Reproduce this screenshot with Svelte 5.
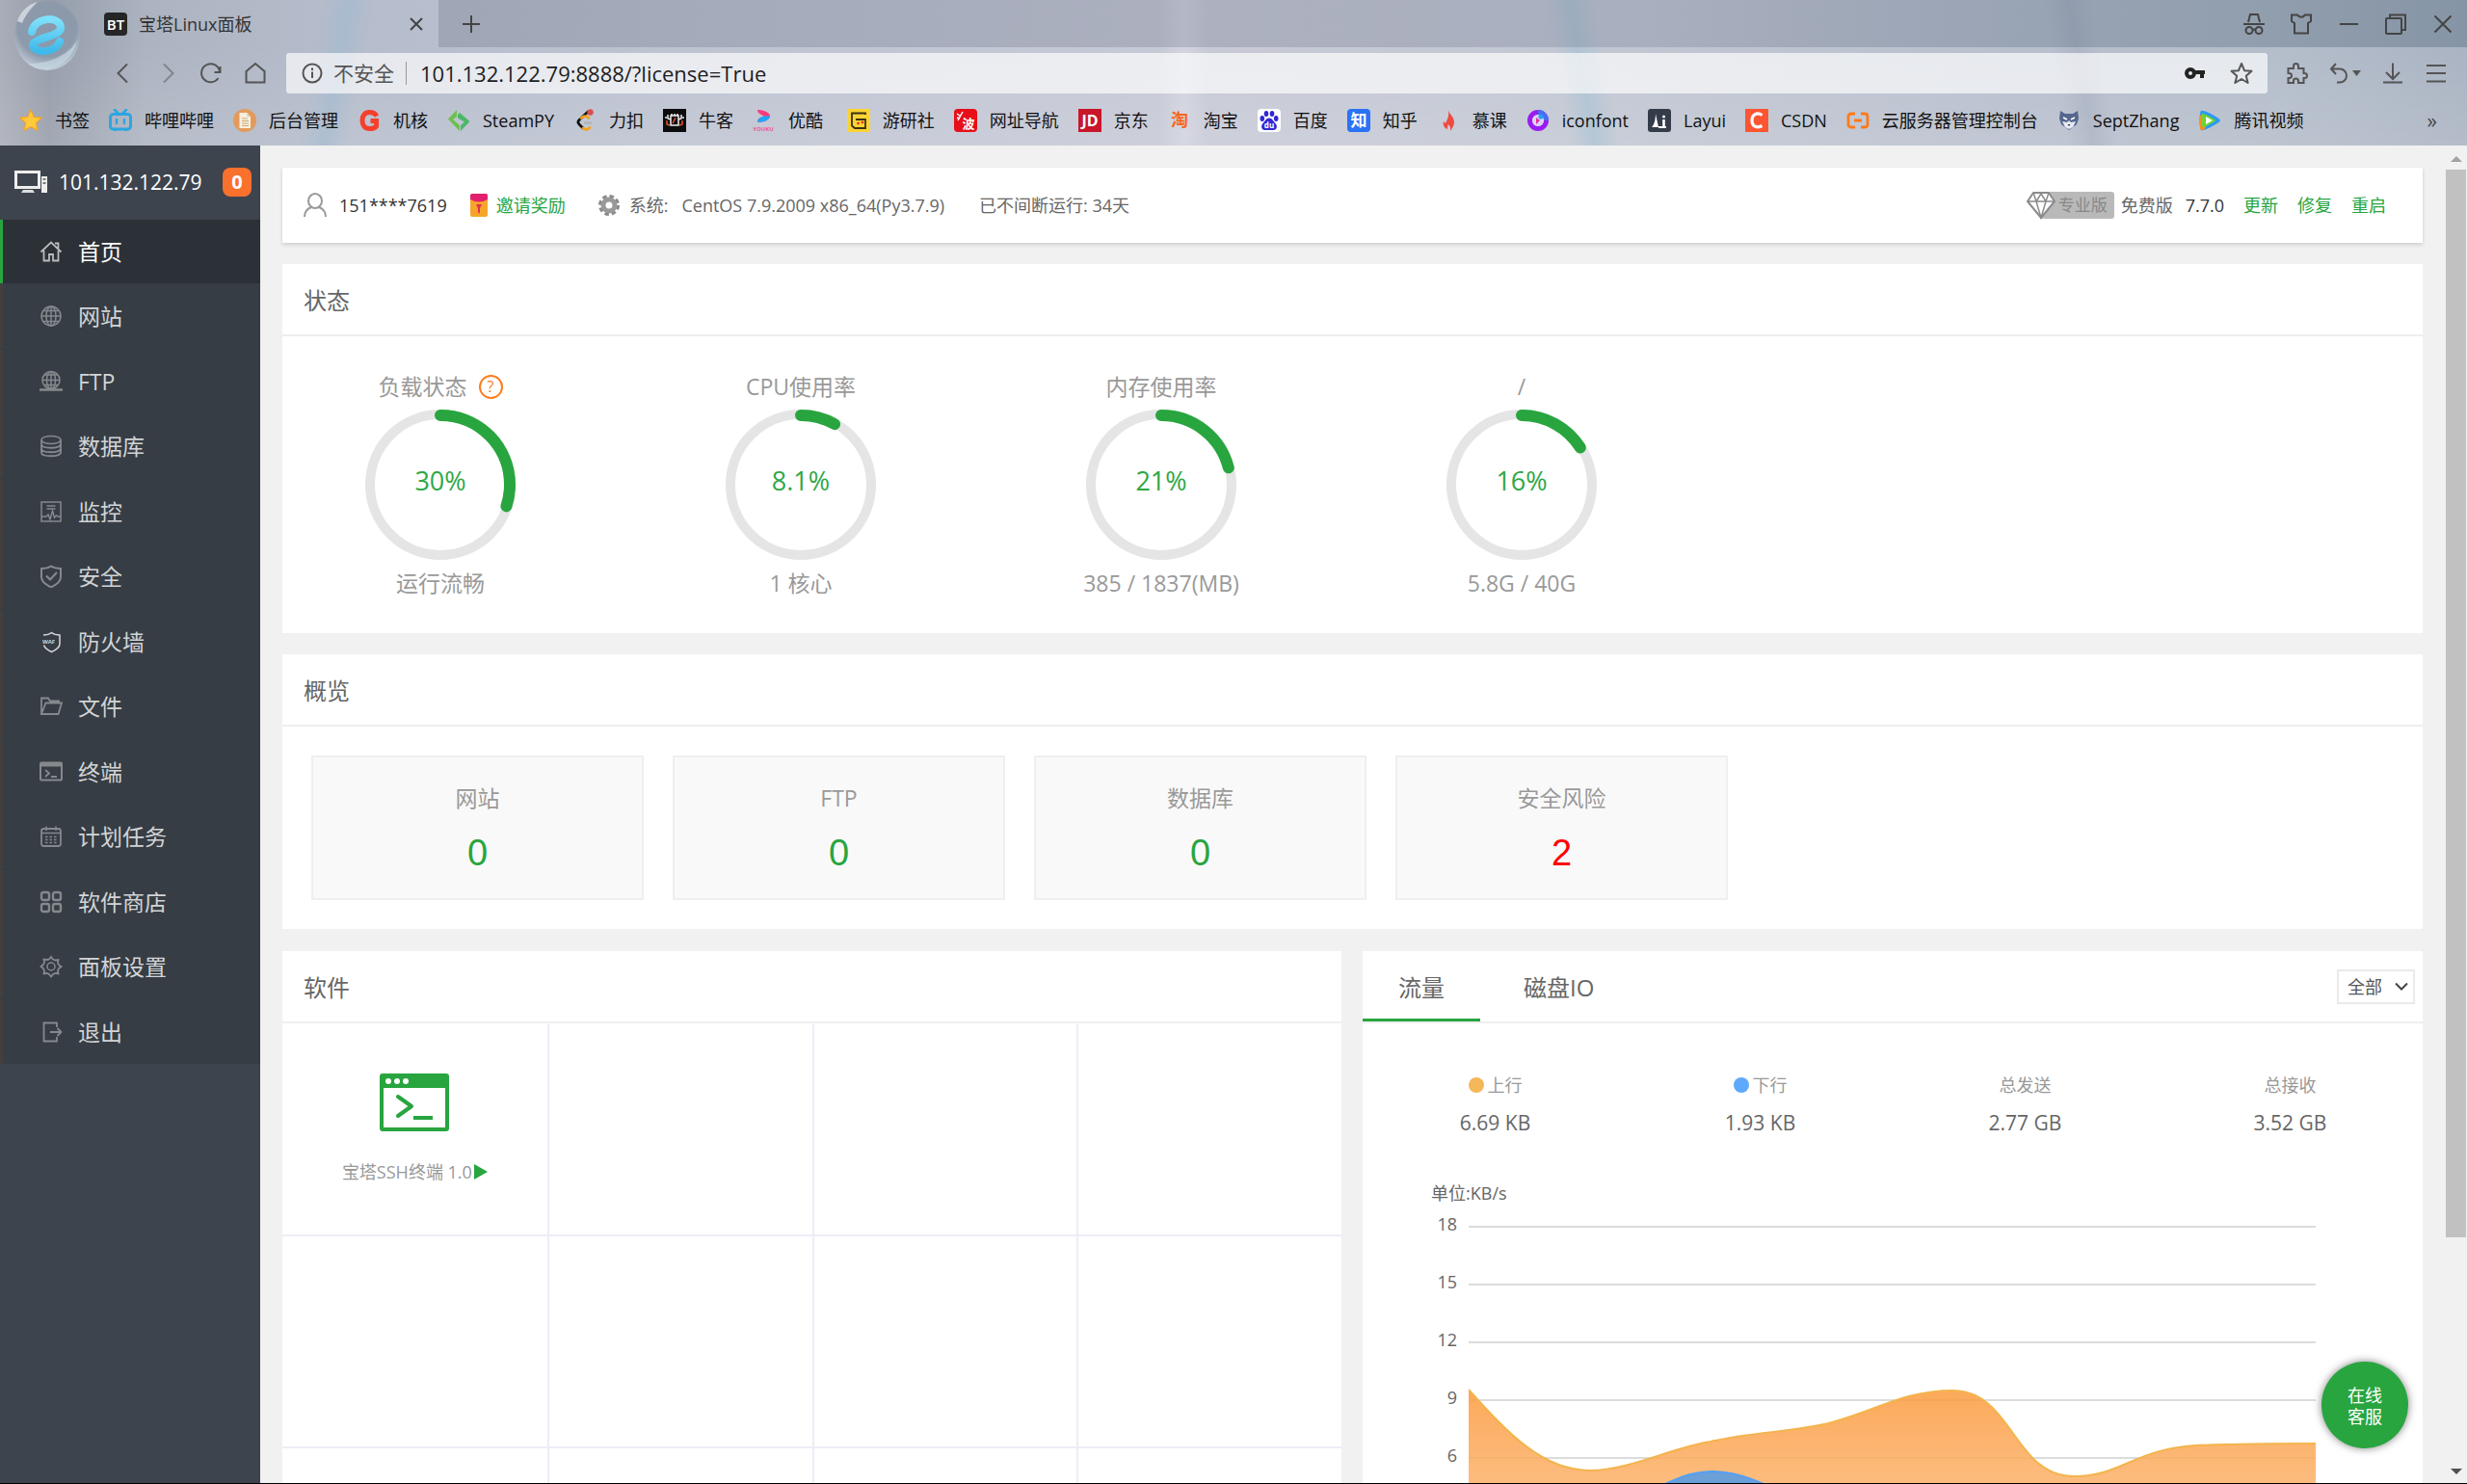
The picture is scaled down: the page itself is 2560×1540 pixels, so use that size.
<script>
  const bookmarks = [
    { name: '书签', icon: 'star' },
    { name: '哔哩哔哩', icon: 'bili' },
    { name: '后台管理', icon: 'doc' },
    { name: '机核', icon: 'g' },
    { name: 'SteamPY', icon: 'steampy' },
    { name: '力扣', icon: 'leet' },
    { name: '牛客', icon: 'niuke' },
    { name: '优酷 ', icon: 'youku' },
    { name: '游研社', icon: 'yys' },
    { name: '网址导航', icon: 'nav' },
    { name: '京东', icon: 'jd' },
    { name: '淘宝', icon: 'tao' },
    { name: '百度', icon: 'baidu' },
    { name: '知乎', icon: 'zhihu' },
    { name: '慕课', icon: 'mooc' },
    { name: 'iconfont', icon: 'iconfont' },
    { name: 'Layui', icon: 'layui' },
    { name: 'CSDN', icon: 'csdn' },
    { name: '云服务器管理控制台', icon: 'cloud' },
    { name: 'SeptZhang', icon: 'sept' },
    { name: '腾讯视频', icon: 'tencent' },
  ];

  const favicons = {
    star: '<path d="M12 1l3.300 7.400 8 .8-6 5.400 1.800 7.900-7.100-4.100-7.100 4.100 1.800-7.900-6-5.400 8-.8z" fill="#ffc93c" stroke="#f3a32a" stroke-width="1.200" stroke-linejoin="round"/>',
    bili: '<path d="M6 1l4 4M18 1l-4 4" stroke="#2ea5df" stroke-width="2.600" stroke-linecap="round"/><rect x="1.500" y="5.500" width="21" height="15.500" rx="3" fill="none" stroke="#2ea5df" stroke-width="3"/><path d="M8 11v4M16 11v4" stroke="#2ea5df" stroke-width="2.400" stroke-linecap="round"/><path d="M5 21h3v2H5zM16 21h3v2h-3z" fill="#2ea5df"/>',
    doc: '<circle cx="12" cy="12" r="12" fill="#e39a5c"/><path d="M6.500 4h8l3.500 4v12H6.500z" fill="#f8efdd"/><path d="M14.500 4v4H18" fill="#d9c5a4"/><path d="M9 10h6M9 12.500h7M9 15h7M9 17.500h7" stroke="#c9a77c" stroke-width="1.100"/>',
    g: '<path d="M20 7.500C18 4 15.500 3.500 12.500 3.500 7.500 3.500 5 7 5 12s2.500 8.500 7.500 8.500c3.500 0 6-1 7-2.500v-5.500h-6" fill="none" stroke="#f5402c" stroke-width="5"/>',
    steampy: '<path d="M10 1v7l-4 3 7 6v6L1 10.500z" fill="#6cc04a"/><path d="M11 6l2-2 10.500 9L14 23v-6l4-3.500-7-4z" fill="#4cb865"/>',
    leet: '<path d="M15 3L6 11.500c-1.500 1.500-1.500 3 0 4.500l4 4" fill="none" stroke="#111" stroke-width="2.600" stroke-linecap="round"/><path d="M8 9.500c3-2.500 5.500-2.500 8 0M10 20c2.500 2 5 1.500 7-.5" fill="none" stroke="#f6a21b" stroke-width="2.600" stroke-linecap="round"/><path d="M11 14.500h8" stroke="#b3b3b3" stroke-width="2.400"/><circle cx="17.500" cy="3.500" r="3.200" fill="#d9504a"/>',
    niuke: '<rect width="24" height="24" fill="#0c0c0c"/><path d="M8 7h8v10H8zM3 8v2M21 8v2M5 6v4l3 1M19 6v4l-3 1M9 7V5M12 7V5M15 7V5" fill="none" stroke="#eee" stroke-width="1.500"/><path d="M10 15l3-6M4 12v4l3 1M20 12v4l-3 1" fill="none" stroke="#e5542e" stroke-width="1.500"/>',
    youku: '<path d="M5 1c0 3 3 5 7 6.500-4 1-7 3-7 6 5 1 13-2 13-6S11 1 5 1z" fill="#fb3b7c"/><path d="M18 7.500c0 4-8 7-13 6 0-3 3-5 7-6z" fill="#20a5fa"/><text x="11" y="22.500" font-size="6" font-weight="700" text-anchor="middle" fill="#e85b93">YOUKU</text>',
    yys: '<rect width="24" height="24" fill="#fbd334"/><path d="M19 6V4.500H5v13l3 2.500h11v-9H9" fill="none" stroke="#3b3210" stroke-width="1.800"/><circle cx="11.500" cy="15" r="1.300" fill="#e22"/><circle cx="16" cy="14" r="1.300" fill="#e22"/>',
    nav: '<rect width="24" height="24" rx="4" fill="#e60f1a"/><text x="15" y="19.500" font-size="13" font-weight="700" text-anchor="middle" fill="#fff">波</text><path d="M3 5l3 2M3 9l3 1M9 3l-5 9" stroke="#fff" stroke-width="1.500"/>',
    jd: '<rect width="24" height="24" fill="#c8162a"/><text x="12" y="18" font-size="16" font-weight="700" text-anchor="middle" fill="#fff">JD</text>',
    tao: '<text x="12" y="18" font-size="18" font-weight="700" text-anchor="middle" fill="#f9651c">淘</text>',
    baidu: '<rect width="24" height="24" rx="4" fill="#fff"/><g fill="#3028d5"><ellipse cx="4.800" cy="10" rx="2.300" ry="3"/><ellipse cx="9" cy="5" rx="2.300" ry="3"/><ellipse cx="15" cy="5" rx="2.300" ry="3"/><ellipse cx="19.200" cy="10" rx="2.300" ry="3"/><path d="M12 9.500c3 0 4 3 6.500 5.500s1.500 7-2 7H7.500c-3.500 0-4.500-4.500-2-7S9 9.500 12 9.500z"/></g><text x="12" y="20" font-size="8" font-weight="700" text-anchor="middle" fill="#fff">du</text>',
    zhihu: '<rect width="24" height="24" rx="4" fill="#2a72f6"/><text x="12" y="18" font-size="17" font-weight="700" text-anchor="middle" fill="#fff">知</text>',
    mooc: '<path d="M12 1c1 5 6 7 6 13 0 3-2 6-4 9 .5-4-.5-5-2-7-1 2-1 3-1 5-3-1-5-4-4-8l2 2c2-4 4-8 3-14z" fill="#ee4b42"/>',
    iconfont: '<circle cx="12" cy="12" r="8.500" fill="none" stroke="#9a1bf2" stroke-width="5"/><path d="M12 3.500a8.500 8.500 0 0 1 8.500 8.500" fill="none" stroke="#4a6cf0" stroke-width="5"/><circle cx="12" cy="12" r="6" fill="#d9d4f4"/><path d="M10 9l4 3-4 4z" fill="#e62ba5"/><circle cx="15" cy="8" r="2.600" fill="#2e9cf7"/>',
    layui: '<rect width="24" height="24" rx="3" fill="#343c4a"/><path d="M4 19c3-3 4-9 4-14l3 14z" fill="#fff"/><path d="M11 18h8v2h-8z" fill="#fff"/><path d="M16.500 11v8" stroke="#fff" stroke-width="2.600"/><circle cx="16.500" cy="8" r="1.500" fill="#fff"/>',
    csdn: '<rect width="24" height="24" fill="#fc5531"/><path d="M17.500 6.500C13 3.500 7 5 7 12s6 8 10.500 5.500" fill="none" stroke="#fff" stroke-width="3.200"/>',
    cloud: '<path d="M9 5H5Q2 5 2 8v8q0 3 3 3h4M15 5h4q3 0 3 3v8q0 3-3 3h-4M8 12h8" fill="none" stroke="#ff7a1a" stroke-width="2.800"/>',
    sept: '<path d="M3 2l5 3h8l5-3 1 8-2 6-8 6-8-6-2-6z" fill="#56678f"/><path d="M5 13l5 1 2-2 2 2 5-1-3 6-4 2-4-2z" fill="#e8ebf2"/><path d="M6 9l4 2M18 9l-4 2" stroke="#fff" stroke-width="1.500"/><path d="M10.500 16h3L12 18z" fill="#27345a"/>',
    tencent: '<path d="M3 2c2-2 20 8 20 10S5 24 3 22 1 4 3 2z" fill="#2a9af5"/><path d="M2 6v14c0 3 3 2 6 0L4 8z" fill="#ff8a1e"/><path d="M4 5c2-1 14 6 14 7S6 20 4.500 19 3 6 4 5z" fill="#6fd42f"/><path d="M8 8l7 4-7 4z" fill="#fff"/>',
  };

  const menu = [
    { name: '首页', icon: 'home' },
    { name: '网站', icon: 'globe' },
    { name: 'FTP', icon: 'ftp' },
    { name: '数据库', icon: 'db' },
    { name: '监控', icon: 'monitor' },
    { name: '安全', icon: 'shield' },
    { name: '防火墙', icon: 'waf' },
    { name: '文件', icon: 'folder' },
    { name: '终端', icon: 'terminal' },
    { name: '计划任务', icon: 'calendar' },
    { name: '软件商店', icon: 'apps' },
    { name: '面板设置', icon: 'gear' },
    { name: '退出', icon: 'exit' },
  ];

  const menuIcons = {
    home: '<g stroke="#b9bbbe" stroke-width="1.800"><path d="M1.500 12.500L12 2.500l10.500 10M16 3.500h3.500v5M4.500 11v10.500H10V15h4v6.500h5.500V11"/></g>',
    globe: '<circle cx="12" cy="12" r="10"/><ellipse cx="12" cy="12" rx="5" ry="10"/><path d="M12 2v20M2 12h20M4 6.500h16M4 17.500h16"/>',
    ftp: '<circle cx="12" cy="10.500" r="9"/><ellipse cx="12" cy="10.500" rx="4.500" ry="9"/><path d="M12 1.500v18M3 10.500h18M5 5h14M5 15.500h14"/><path d="M0 20.500h24M9 20.500h6" stroke-width="2.500"/>',
    db: '<ellipse cx="12" cy="5.500" rx="10" ry="4"/><path d="M2 5.500v13c0 5 20 5 20 0v-13M2 10c0 5 20 5 20 0M2 14.500c0 5 20 5 20 0" stroke-width="1.800"/>',
    monitor: '<rect x="2" y="2" width="20" height="20"/><path d="M7.500 6h9M7.500 9h9M2 17h5l2-2 2 5 2.500-9 2 7 2-2 1.500 1H22"/>',
    shield: '<path d="M12 1.500c3 2 6 2.500 10 2.500v9c0 5-5 8-10 10.500C7 21 2 18 2 13V4c4 0 7-.5 10-2.500z" stroke-width="2"/><path d="M7 11.500l4 4 7-7.500" stroke-width="2.200"/>',
    waf: '<g stroke="#cfd1d3" stroke-width="1.600"><path d="M4 5c3 0 6-.5 8.500-2.500C15 4.500 17 5 21 5v9c0 4-4 6.500-8.500 8.500C8 20.500 5.500 18.500 4.500 15.500"/></g><text x="9.500" y="13.500" font-size="6" font-weight="700" text-anchor="middle" fill="#cfd1d3" stroke="none">WAF</text>',
    folder: '<path d="M2 20V3.500h7l2 3h9V9M2 20L6.500 8.500H23L19.500 20z" stroke-width="1.800"/>',
    terminal: '<rect x="1" y="2.500" width="22" height="18" rx="1" stroke-width="2"/><path d="M1 4.500h22" stroke-width="4"/><path d="M6 10l4 3.500L6 17M12 17h6" stroke-width="1.800"/>',
    calendar: '<rect x="2" y="4" width="20" height="18" rx="2.500" stroke-width="1.800"/><path d="M2 8.500h20M7 1.500V6M17 1.500V6"/><path d="M6 12.500h12M6 15.500h12M6 18.500h12" stroke-dasharray="2.500 2" stroke-width="1.700"/>',
    apps: '<g stroke-width="2.400"><rect x="2" y="2" width="8" height="8" rx="2"/><rect x="14" y="2" width="8" height="8" rx="2"/><rect x="2" y="14" width="8" height="8" rx="2"/><rect x="14" y="14" width="8" height="8" rx="2"/></g>',
    gear: '<circle cx="12" cy="12" r="4"/><path d="M10 4.500L12 2l2 2.500 2.500 1 3-.5-.5 3 1 2.500L22.500 12 20 14l-1 2.500.5 3-3-.5-2.500 1-2 2.500L10 20l-2.500-1-3 .5.500-3L4 14l-2.500-2L4 10l1-2.500-.5-3 3 .5z" stroke-width="1.800"/>',
    exit: '<path d="M18 7V2.500H4.500v19H18V17M11 12h11M18.500 8l4 4-4 4" stroke-width="1.800"/>',
  };

  const gauges = [
    { title: '负载状态', help: true, value: 30, note: '运行流畅' },
    { title: 'CPU使用率', value: 8.1, note: '1 核心' },
    { title: '内存使用率', value: 21, note: '385 / 1837(MB)' },
    { title: '/', value: 16, note: '5.8G / 40G' },
  ];

  const overview = [
    { name: '网站', count: 0 },
    { name: 'FTP', count: 0 },
    { name: '数据库', count: 0 },
    { name: '安全风险', count: 2, risk: true },
  ];

  const stats = [
    { name: '上行', value: '6.69 KB', dot: 'up' },
    { name: '下行', value: '1.93 KB', dot: 'down' },
    { name: '总发送', value: '2.77 GB' },
    { name: '总接收', value: '3.52 GB' },
  ];

  const ticks = [18, 15, 12, 9, 6];
  const cells = Array.from({ length: 12 }, (_, i) => i);
  const ring = 2 * Math.PI * 72;

  let url = $state('101.132.122.79:8888/?license=True');
  let tab = $state('net');
  let scope = $state('all');
</script>

<div class="window">
  <header class="chrome">
    <svg class="logo" viewBox="0 0 72 76" aria-hidden="true">
      <defs>
        <radialGradient id="ball" cx="50%" cy="35%" r="65%">
          <stop offset="0" stop-color="#8b98ab" />
          <stop offset="0.700" stop-color="#8d9aab" />
          <stop offset="1" stop-color="#c3ced9" />
        </radialGradient>
        <linearGradient id="eFill" x1="0" y1="0" x2="0" y2="1">
          <stop offset="0" stop-color="#7fe0fa" />
          <stop offset="1" stop-color="#3fb9ea" />
        </linearGradient>
      </defs>
      <ellipse cx="36" cy="37" rx="34" ry="36" fill="url(#ball)" />
      <path d="M5 22C9 10 18 4 26 2C20 8 14 14 10 24z" fill="#e6eaf0" opacity="0.700" />
      <path d="M16 66c12 10 30 8 42-6 6-7 8-12 9-18-8 14-26 24-51 24z" fill="#c5d8e2" opacity="0.700" />
      <path d="M20 33C23 17 50 16 50 29C50 38 26 38 21 46C21 56 44 56 49 43" fill="none" stroke="url(#eFill)" stroke-width="8" stroke-linecap="round" stroke-linejoin="round" />
    </svg>

    <div class="tabstrip">
      <div class="tab">
        <span class="tabicon">BT</span>
        <span class="tabtitle">宝塔Linux面板</span>
        <button class="plain" aria-label="关闭标签页">
          <svg width="16" height="16" viewBox="0 0 16 16"><path d="M2 2l12 12M14 2L2 14" /></svg>
        </button>
      </div>
      <div class="strip">
        <button class="plain" aria-label="新标签页">
          <svg width="20" height="20" viewBox="0 0 20 20"><path d="M10 1v18M1 10h18" /></svg>
        </button>
        <div class="winctl">
          <button class="plain" aria-label="无痕模式">
            <svg width="24" height="24" viewBox="0 0 24 24"><path d="M6 10l2-8h8l2 8M1 12h22" /><circle cx="7" cy="18.500" r="3.500" /><circle cx="17" cy="18.500" r="3.500" /><path d="M10.500 18q1.500-1 3 0" /></svg>
          </button>
          <button class="plain" aria-label="皮肤">
            <svg width="24" height="24" viewBox="0 0 24 24"><path d="M2 2.500h6q4 4.500 8 0h6V9l-3 2v10.500H5V11L2 9z" /></svg>
          </button>
          <button class="plain" aria-label="最小化">
            <svg width="24" height="24" viewBox="0 0 24 24"><path d="M3 12h19" /></svg>
          </button>
          <button class="plain" aria-label="还原">
            <svg width="24" height="24" viewBox="0 0 24 24"><rect x="2" y="6" width="16" height="16" rx="1" /><path d="M6 6V2.500h16V18h-4" /></svg>
          </button>
          <button class="plain" aria-label="关闭">
            <svg width="24" height="24" viewBox="0 0 24 24"><path d="M3.500 3.500l17 17M20.500 3.500l-17 17" /></svg>
          </button>
        </div>
      </div>
    </div>

    <div class="toolbar">
      <nav class="navbtns" aria-label="导航">
        <button class="plain" aria-label="后退"><svg width="24" height="24" viewBox="0 0 24 24"><path d="M17 2.500L7.500 12l9.500 9.500" /></svg></button>
        <button class="plain faded" aria-label="前进"><svg width="24" height="24" viewBox="0 0 24 24"><path d="M9 2.500l9.500 9.500L9 21.500" /></svg></button>
        <button class="plain" aria-label="刷新"><svg width="24" height="24" viewBox="0 0 24 24"><path d="M21.500 5v6h-6M21 10.500A9.500 9.500 0 1 0 19.500 17" /></svg></button>
        <button class="plain" aria-label="主页"><svg width="24" height="24" viewBox="0 0 24 24"><path d="M2.500 10L12 2l9.500 8v11.500h-19z" /></svg></button>
      </nav>
      <div class="address">
        <svg width="22" height="22" viewBox="0 0 22 22"><circle cx="11" cy="11" r="9.500" /><path d="M11 9.500V16M11 5.500V8" /></svg>
        <label for="url">不安全</label>
        <input id="url" type="text" bind:value={url} />
        <button class="plain" aria-label="密码">
          <svg width="22" height="14" viewBox="0 0 22 14"><circle class="key" cx="6" cy="7" r="4" /><path class="key" d="M10 6h11M18 6v6" /></svg>
        </button>
        <button class="plain" aria-label="收藏">
          <svg width="24" height="24" viewBox="0 0 24 24"><path d="M12 2l3 7.200 7.500.6-5.700 5 1.800 7.200-6.600-4-6.600 4 1.800-7.200-5.700-5L9 9.200z" stroke-linejoin="round" /></svg>
        </button>
      </div>
      <div class="tools">
        <button class="plain" aria-label="扩展"><svg width="24" height="24" viewBox="0 0 24 24"><path d="M3.500 7H9V4.500a2.500 2.500 0 0 1 5 0V7h5.500v5h1a2.500 2.500 0 0 1 0 5h-1v5H14v-2a2.300 2.300 0 0 0-5 0v2H3.500v-5h1a2.500 2.500 0 0 0 0-5h-1z" /></svg></button>
        <button class="plain" aria-label="撤销"><svg width="34" height="24" viewBox="0 0 34 24"><path d="M8 2L3 7.500 8 13M3 7.500h9a7 7 0 0 1 0 14H9" /><path class="caret" d="M25 9h9l-4.500 6z" /></svg></button>
        <button class="plain" aria-label="下载"><svg width="24" height="24" viewBox="0 0 24 24"><path d="M12 1.500v16M5 11l7 7 7-7M2 21.500h20" /></svg></button>
        <button class="plain" aria-label="菜单"><svg width="24" height="24" viewBox="0 0 24 24"><path d="M2 4h20M2 12h20M2 20.500h20" /></svg></button>
      </div>
    </div>

    <nav class="bookmarks" aria-label="书签栏">
      {#each bookmarks as b}
        <a href="#{b.icon}">
          <svg width="24" height="24" viewBox="0 0 24 24" aria-hidden="true">{@html favicons[b.icon]}</svg>
          <span>{b.name}</span>
        </a>
      {/each}
      <button class="plain more" aria-label="更多书签">»</button>
    </nav>
  </header>

  <div class="body">
    <aside class="side">
      <div class="host">
        <svg width="34" height="26" viewBox="0 0 34 26" aria-hidden="true">
          <rect x="1.500" y="2.500" width="24" height="16" fill="none" stroke="#eee" stroke-width="3" />
          <path d="M9 21h10l2 3H7z" fill="#ddd" />
          <rect x="28" y="7" width="6" height="17" fill="#eee" />
          <path d="M29.500 10h3M29.500 14h3" stroke="#555" stroke-width="1.500" />
        </svg>
        <span class="ip">101.132.122.79</span>
        <span class="badge">0</span>
      </div>
      <nav class="menu" aria-label="主菜单">
        {#each menu as m, i}
          <a href="#{m.icon}" class:active={i === 0}>
            <svg width="24" height="24" viewBox="0 0 24 24" fill="none" stroke="#85898d" stroke-width="1.500" aria-hidden="true">{@html menuIcons[m.icon]}</svg>
            <span>{m.name}</span>
          </a>
        {/each}
      </nav>
    </aside>

    <main>
      <section class="card info">
        <svg class="user" width="26" height="26" viewBox="0 0 26 26" aria-hidden="true"><ellipse cx="12" cy="8.500" rx="7" ry="7.500" /><path d="M8 15C3 17 1 20 1 25M16 15c5 2 7 5 7 10" /></svg>
        <span class="dark phone">151****7619</span>
        <svg class="packet" width="18" height="24" viewBox="0 0 18 24" aria-hidden="true"><rect width="18" height="24" rx="2" fill="#f5a62a" /><path d="M0 6V2q0-2 2-2h14q2 0 2 2v4q-9 5-18 0z" fill="#e2206d" /><path d="M6 11h6l-2 4v4l-1 2-1-2v-4z" fill="#e2304f" /></svg>
        <a class="green" href="#invite">邀请奖励</a>
        <svg class="cog" width="22" height="22" viewBox="0 0 22 22" aria-hidden="true"><circle cx="11" cy="11" r="9.500" fill="none" stroke="#888" stroke-width="3" stroke-dasharray="4.500 3" /><circle cx="11" cy="11" r="6" fill="none" stroke="#999" stroke-width="5" /></svg>
        <span>系统:</span>
        <span class="os">CentOS 7.9.2009 x86_64(Py3.7.9)</span>
        <span class="uptime">已不间断运行: 34天</span>
        <div class="version">
          <span class="pro">
            <svg width="30" height="30" viewBox="0 0 30 30" aria-hidden="true"><path d="M7 2h16l6 9-14 17L1 11z" fill="#fff" stroke="#8b8b8b" stroke-width="2" stroke-linejoin="round" /><path d="M1 11h28M7 2l3 9 5-8 5 8 3-9M10 11l5 17 5-17" fill="none" stroke="#8b8b8b" stroke-width="1.500" /></svg>
            <span>专业版</span>
          </span>
          <span>免费版</span>
          <span class="dark num">7.7.0</span>
          <a class="green" href="#update">更新</a>
          <a class="green" href="#repair">修复</a>
          <a class="green" href="#restart">重启</a>
        </div>
      </section>

      <section class="card">
        <h2>状态</h2>
        <div class="gauges">
          {#each gauges as g}
            <div class="gauge">
              <div class="line">
                <span>{g.title}</span>
                {#if g.help}<button class="plain help" aria-label="帮助">?</button>{/if}
              </div>
              <svg width="158" height="158" viewBox="0 0 158 158" role="img" aria-label="{g.title} {g.value}%">
                <circle cx="79" cy="79" r="73" fill="none" stroke="#e5e5e5" stroke-width="10" />
                <circle cx="79" cy="79" r="72" fill="none" stroke="#28a53f" stroke-width="12" stroke-linecap="round" stroke-dasharray="{(ring * g.value) / 100} {ring}" transform="rotate(-90 79 79)" />
                <text x="79" y="85" text-anchor="middle" font-size="27" fill="#2fa746">{g.value}%</text>
              </svg>
              <div class="line">{g.note}</div>
            </div>
          {/each}
        </div>
      </section>

      <section class="card">
        <h2>概览</h2>
        <div class="overview">
          {#each overview as o}
            <a class="box" href="#{o.name}">
              <span>{o.name}</span>
              <strong class:risk={o.risk}>{o.count}</strong>
            </a>
          {/each}
        </div>
      </section>

      <div class="split">
        <section class="card">
          <h2>软件</h2>
          <div class="apps">
            {#each cells as c}
              <div class="cell">
                {#if c === 0}
                  <svg width="72" height="60" viewBox="0 0 72 60" aria-hidden="true">
                    <rect x="2" y="2" width="68" height="56" rx="1" fill="#fff" stroke="#28a53f" stroke-width="4" />
                    <path d="M1 1h70v14H1z" fill="#28a53f" />
                    <circle cx="9" cy="8" r="3" fill="#fff" /><circle cx="18" cy="8" r="3" fill="#fff" /><circle cx="27" cy="8" r="3" fill="#fff" />
                    <path d="M19 24l14 10-14 10" fill="none" stroke="#28a53f" stroke-width="4" stroke-linecap="round" stroke-linejoin="round" />
                    <path d="M35 46h20" stroke="#28a53f" stroke-width="4" />
                  </svg>
                  <div class="appname">宝塔SSH终端 1.0<svg width="14" height="16" viewBox="0 0 14 16" aria-hidden="true"><path d="M0 0l14 8-14 8z" fill="#28a53f" /></svg></div>
                {/if}
              </div>
            {/each}
          </div>
        </section>

        <section class="card">
          <div class="tabs">
            <button class="plain" class:on={tab === 'net'} onclick={() => (tab = 'net')}>流量</button>
            <button class="plain" class:on={tab === 'disk'} onclick={() => (tab = 'disk')}>磁盘IO</button>
            <div class="pick">
              <select aria-label="网卡" bind:value={scope}>
                <option value="all">全部</option>
                <option value="eth0">eth0</option>
              </select>
              <svg width="14" height="10" viewBox="0 0 14 10" aria-hidden="true"><path d="M1 1.500l6 6 6-6" fill="none" stroke="#444" stroke-width="2" /></svg>
            </div>
          </div>
          <div class="stats">
            {#each stats as s}
              <div class="stat">
                <span class="label">{#if s.dot}<i class="dot {s.dot}"></i>{/if}{s.name}</span>
                <span class="value">{s.value}</span>
              </div>
            {/each}
          </div>
          <div class="chart">
            <div class="unit">单位:KB/s</div>
            <div class="plot">
              <div class="ticks">{#each ticks as t}<span>{t}</span>{/each}</div>
              <svg viewBox="0 0 879 362" preserveAspectRatio="none" aria-hidden="true">
                <defs>
                  <linearGradient id="up" x1="0" y1="0" x2="0" y2="1">
                    <stop offset="0" stop-color="#fb9a3c" stop-opacity="0.850" />
                    <stop offset="1" stop-color="#fdc693" stop-opacity="0.850" />
                  </linearGradient>
                </defs>
                {#each ticks as t, i}
                  <path d="M0 {i * 60 + 1}H879" stroke="#dcdcdc" stroke-width="2" />
                {/each}
                <path d="M0 170C38 212 75 254 126 254C166 254 211 230 251 224C297 213 335 215 377 204C425 191 452 171 502 171C565 171 565 260 628 260C678 260 690 232 754 228C800 226 840 226 879 226V361H0Z" fill="url(#up)" />
                <path d="M0 170C38 212 75 254 126 254C166 254 211 230 251 224C297 213 335 215 377 204C425 191 452 171 502 171C565 171 565 260 628 260C678 260 690 232 754 228C800 226 840 226 879 226" fill="none" stroke="#f3b44c" stroke-width="2" />
                <path d="M126 310C160 300 205 255 252 255C300 255 340 290 377 300V361H126Z" fill="#6b9fd8" />
                <path d="M126 310C160 300 205 255 252 255C300 255 340 290 377 300" fill="none" stroke="#52a0f5" stroke-width="2" />
              </svg>
            </div>
          </div>
        </section>
      </div>
    </main>

    <div class="scroll" aria-hidden="true">
      <svg width="12" height="6" viewBox="0 0 12 6"><path d="M0 6l6-6 6 6z" fill="#a3a3a3" /></svg>
      <div class="thumb"></div>
      <svg width="12" height="6" viewBox="0 0 12 6"><path d="M0 0l6 6 6-6z" fill="#505050" /></svg>
    </div>
  </div>

  <button class="plain service">在线<br />客服</button>
</div>

<style>
  :global(body) {
    margin: 0;
    background: #f1f1f1;
  }

  .window {
    position: relative;
    display: flex;
    flex-direction: column;
    height: 100vh;
    box-sizing: border-box;
    border-bottom: 1px solid #000;
    overflow: hidden;
    font-family: 'Open Sans', 'Noto Sans CJK SC', sans-serif;
    font-size: 18px;
    line-height: 24px;
    color: #666;
  }

  a {
    color: inherit;
    text-decoration: none;
  }

  .plain {
    display: inline-flex;
    align-items: center;
    justify-content: center;
    padding: 0;
    border: 0;
    background: none;
    font: inherit;
    color: inherit;
    cursor: pointer;
  }

  svg {
    flex: none;
  }

  /* browser frame */
  .chrome {
    position: relative;
    flex: none;
    height: 151px;
    background:
      linear-gradient(100deg, transparent 13%, rgba(150, 185, 210, 0.4) 14%, transparent 15%),
      linear-gradient(90deg, transparent 47%, rgba(225, 225, 235, 0.45) 48%, transparent 49%),
      linear-gradient(80deg, transparent 63%, rgba(150, 190, 210, 0.4) 64%, transparent 65%),
      linear-gradient(80deg, transparent 83%, rgba(150, 160, 180, 0.3) 84%, transparent 85%),
      linear-gradient(180deg, rgba(255, 255, 255, 0) 30%, rgba(255, 255, 255, 0.12)),
      linear-gradient(90deg, #a9adb8, #969daa 2%, #adb4c1 6%, #b5bccb 14%, #bfc4d2 30%, #c7cad6 50%, #c2c7d3 65%, #b8bfcd 82%, #b4bdca 92%, #aab3c2);
  }

  .chrome svg {
    fill: none;
    stroke: #444;
    stroke-width: 2;
  }

  .chrome .toolbar svg {
    stroke: #555;
  }

  .chrome .key {
    stroke: #222;
    stroke-width: 4;
  }

  .chrome .caret {
    fill: #555;
    stroke: none;
  }

  .chrome .bookmarks svg {
    stroke: none;
  }

  .chrome .logo {
    position: absolute;
    left: 13px;
    top: 0;
    width: 72px;
    height: 76px;
    stroke: none;
  }

  .tabstrip {
    display: flex;
    height: 49px;
  }

  .tab {
    display: flex;
    align-items: center;
    box-sizing: border-box;
    width: 455px;
    padding: 0 15px 0 108px;
    gap: 12px;
    color: #333;
  }

  .tabicon {
    width: 24px;
    height: 24px;
    border-radius: 4px;
    background: #262626;
    color: #fff;
    font-size: 15px;
    font-weight: 600;
    text-align: center;
  }

  .tabtitle {
    flex: 1;
  }

  .strip {
    flex: 1;
    display: flex;
    align-items: center;
    justify-content: space-between;
    padding: 0 13px 0 24px;
    background: linear-gradient(90deg, rgba(80, 90, 110, 0.24), rgba(90, 100, 125, 0.24) 60%, rgba(70, 95, 115, 0.36));
  }

  .winctl {
    display: flex;
    gap: 25px;
  }

  .toolbar {
    display: flex;
    align-items: center;
    height: 42px;
    padding: 6px 20px 0 115px;
  }

  .navbtns {
    display: flex;
    gap: 22px;
    width: 182px;
  }

  .faded {
    opacity: 0.5;
  }

  .address {
    flex: 1;
    display: flex;
    align-items: center;
    height: 42px;
    padding: 0 15px 0 16px;
    border-radius: 3px;
    background: rgba(255, 255, 255, 0.66);
    color: #555;
  }

  .address label {
    margin-left: 11px;
    padding-right: 12px;
    border-right: 1px solid #999;
    font-size: 21px;
  }

  .address input {
    flex: 1;
    min-width: 0;
    padding: 0 0 0 14px;
    border: 0;
    outline: 0;
    background: none;
    font: inherit;
    font-size: 22px;
    line-height: 30px;
    color: #1d1d22;
  }

  .address button {
    margin-left: 25px;
  }

  .tools {
    display: flex;
    gap: 21px;
    margin-left: 18px;
  }

  .bookmarks {
    display: flex;
    align-items: center;
    gap: 20px;
    height: 56px;
    padding: 0 31px 0 20px;
    color: #111;
    white-space: pre;
  }

  .bookmarks a {
    display: flex;
    align-items: center;
    gap: 13px;
  }

  .bookmarks .more {
    margin-left: auto;
    color: #444;
    font-size: 21px;
  }

  /* panel */
  .body {
    flex: 1;
    display: flex;
    min-height: 0;
  }

  .side {
    flex: none;
    width: 270px;
    background: #3d444d;
    color: #d2d4d6;
  }

  .host {
    display: flex;
    align-items: center;
    height: 75px;
    padding: 0 9px 2px 15px;
    color: #fff;
  }

  .ip {
    flex: 1;
    padding-left: 12px;
    font-size: 21px;
  }

  .badge {
    width: 30px;
    border-radius: 8px;
    background: #fa702d;
    font-size: 20px;
    font-weight: 700;
    line-height: 30px;
    text-align: center;
  }

  .menu a {
    display: flex;
    align-items: center;
    gap: 16px;
    height: 66px;
    padding-left: 38px;
    border-left: 3px solid #433f3f;
    margin-bottom: 1px;
    background: #363d44;
    font-size: 23px;
    box-shadow: 0 2px 0 #363d44;
  }

  .menu a:nth-child(even) {
    margin-bottom: 2px;
  }

  .menu a:last-child {
    margin-bottom: 0;
    box-shadow: none;
  }

  .menu a.active {
    border-color: #28a53f;
    background: #2c3037;
    color: #fff;
  }

  main {
    flex: 1;
    min-width: 0;
    padding: 23px 23px 0;
    overflow: hidden;
  }

  .card {
    background: #fff;
    margin-bottom: 22px;
  }

  .info {
    display: flex;
    align-items: center;
    height: 78px;
    padding: 0 38px 0 22px;
    box-shadow: 0 2px 4px rgba(0, 0, 0, 0.15);
    white-space: nowrap;
  }

  .user {
    fill: none;
    stroke: #999;
    stroke-width: 2;
  }

  .dark {
    color: #333;
  }

  .green {
    color: #28a53f;
  }

  .phone {
    padding: 0 24px 0 11px;
  }

  .packet {
    margin-right: 9px;
  }

  .cog {
    margin: 0 10px 0 34px;
  }

  .os {
    padding: 0 36px 0 14px;
  }

  .version {
    display: flex;
    align-items: center;
    gap: 20px;
    margin-left: auto;
  }

  .pro {
    display: flex;
    align-items: center;
    margin-right: -13px;
  }

  .pro span {
    margin-left: -15px;
    padding: 0 7px 0 18px;
    border-radius: 3px;
    background: #b9b9b9;
    color: #888;
    font-size: 17px;
    line-height: 28px;
  }

  .pro svg {
    position: relative;
  }

  .num {
    margin-left: -7px;
  }

  h2 {
    margin: 0;
    padding: 2px 22px 0;
    border-bottom: 2px solid #eee;
    font-size: 24px;
    font-weight: 400;
    line-height: 71px;
    color: #666;
  }

  .gauges {
    display: flex;
    gap: 46px;
    padding: 38px 0;
  }

  .gauge {
    display: flex;
    flex-direction: column;
    align-items: center;
    gap: 9px;
    width: 328px;
    color: #999;
    font-size: 23px;
    line-height: 28px;
  }

  .line {
    display: flex;
    align-items: center;
    gap: 12px;
    height: 28px;
  }

  .help {
    width: 25px;
    height: 25px;
    border: 2px solid #fc7d1c;
    border-radius: 50%;
    color: #fc7d1c;
    font-size: 16px;
    line-height: 20px;
  }

  .overview {
    display: flex;
    gap: 30px;
    padding: 30px;
  }

  .box {
    display: flex;
    flex-direction: column;
    align-items: center;
    gap: 20px;
    box-sizing: border-box;
    width: 345px;
    height: 150px;
    padding-top: 27px;
    border: 2px solid #efefef;
    background: #f9f9f9;
    color: #999;
    font-size: 23px;
    line-height: 30px;
  }

  .box strong {
    font-family: 'Liberation Sans', sans-serif;
    font-size: 38px;
    font-weight: 400;
    line-height: 44px;
    color: #28a53f;
  }

  .box strong.risk {
    color: #f00;
  }

  .split {
    display: grid;
    grid-template-columns: 1fr 1fr;
    gap: 22px;
    margin-top: 23px;
  }

  .apps {
    display: grid;
    grid-template-columns: repeat(4, 1fr);
    padding-top: 1px;
  }

  .cell {
    display: flex;
    flex-direction: column;
    align-items: center;
    gap: 30px;
    box-sizing: border-box;
    height: 220px;
    padding-top: 51px;
    border-left: 2px solid #ededf8;
    border-bottom: 2px solid #ededf8;
    color: #999;
  }

  .cell:nth-child(4n + 1) {
    border-left: 0;
  }

  .appname {
    display: flex;
    align-items: center;
    gap: 2px;
    white-space: nowrap;
  }

  .tabs {
    display: flex;
    align-items: stretch;
    height: 73px;
    border-bottom: 2px solid #eee;
  }

  .tabs button {
    box-sizing: border-box;
    padding: 5px 37px 0;
    border-bottom: 3px solid transparent;
    font-size: 24px;
  }

  .tabs button + button {
    margin-left: 8px;
  }

  .tabs .on {
    border-color: #28a53f;
  }

  .pick {
    display: grid;
    align-items: center;
    justify-items: end;
    align-self: center;
    margin: 0 8px 0 auto;
  }

  .pick select,
  .pick svg {
    grid-area: 1 / 1;
  }

  .pick svg {
    margin-right: 7px;
    pointer-events: none;
  }

  .pick select {
    appearance: none;
    box-sizing: border-box;
    width: 81px;
    height: 36px;
    padding: 0 0 0 9px;
    border: 2px solid #eaeaea;
    border-radius: 0;
    background: #fff;
    font: inherit;
    color: #555;
  }

  .stats {
    display: grid;
    grid-template-columns: repeat(4, 1fr);
    padding-top: 52px;
  }

  .stat {
    display: flex;
    flex-direction: column;
    align-items: center;
    gap: 13px;
  }

  .label {
    display: flex;
    align-items: center;
    gap: 4px;
    color: #999;
  }

  .dot {
    width: 16px;
    height: 16px;
    border-radius: 50%;
  }

  .up {
    background: #f4b75a;
  }

  .down {
    background: #5fa9fc;
  }

  .value {
    font-size: 21px;
    line-height: 28px;
  }

  .chart {
    padding: 47px 111px 40px 71px;
  }

  .unit {
    margin-bottom: 8px;
  }

  .plot {
    display: flex;
    gap: 12px;
  }

  .ticks {
    display: flex;
    flex-direction: column;
    gap: 36px;
    width: 27px;
    text-align: right;
  }

  .plot svg {
    flex: 1;
    min-width: 0;
    height: 362px;
    margin-top: 14px;
  }

  .scroll {
    display: flex;
    flex-direction: column;
    align-items: center;
    flex: none;
    width: 23px;
    padding: 11px 0 9px;
    box-sizing: border-box;
  }

  .thumb {
    width: 21px;
    height: 81%;
    margin: 8px 0 auto;
    background: #c1c1c1;
  }

  .service {
    position: absolute;
    right: 61px;
    bottom: 36px;
    width: 90px;
    height: 90px;
    padding-top: 2px;
    border-radius: 50%;
    background: #28a53f;
    box-shadow: 0 0 8px rgba(0, 0, 0, 0.5);
    color: #fff;
    line-height: 22px;
  }
</style>
